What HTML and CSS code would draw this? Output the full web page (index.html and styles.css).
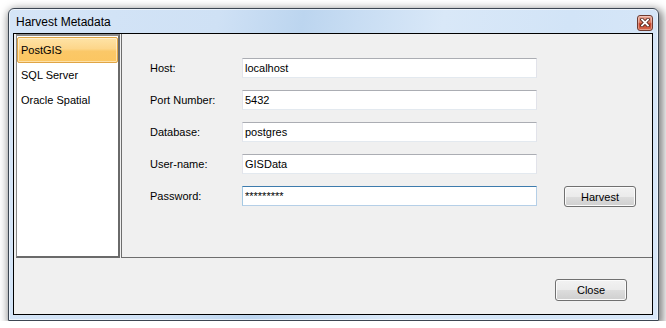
FILE: index.html
```html
<!DOCTYPE html>
<html lang="en">
<head>
    <meta charset="UTF-8">
    <title>Harvest Metadata</title>
    <link rel="stylesheet" href="styles.css">
</head>
<body>
    <div class="window">
        <div class="titlebar">
            <span class="title">Harvest Metadata</span>
            <button class="close-x" title="Close">
                <svg width="10" height="9" viewBox="0 0 10 9">
                    <path d="M2 1.5 L8 7.5 M8 1.5 L2 7.5" stroke="#4a1f18" stroke-width="3.4" stroke-linecap="square"/>
                    <path d="M2 1.5 L8 7.5 M8 1.5 L2 7.5" stroke="#ffffff" stroke-width="1.8" stroke-linecap="square"/>
                </svg>
            </button>
        </div>

        <div class="client">
            <div class="split">
                <ul class="sources">
                    <li class="selected">PostGIS</li>
                    <li>SQL Server</li>
                    <li>Oracle Spatial</li>
                </ul>

                <div class="settings">
                    <div class="form">
                        <label for="host">Host:</label>
                        <input type="text" id="host" value="localhost">
                        <span></span>

                        <label for="port">Port Number:</label>
                        <input type="text" id="port" value="5432">
                        <span></span>

                        <label for="database">Database:</label>
                        <input type="text" id="database" value="postgres">
                        <span></span>

                        <label for="user">User-name:</label>
                        <input type="text" id="user" value="GISData">
                        <span></span>

                        <label for="password">Password:</label>
                        <input type="text" id="password" class="focused" value="*********">
                        <button class="btn harvest">Harvest</button>
                    </div>
                </div>
            </div>

            <div class="footer">
                <button class="btn">Close</button>
            </div>
        </div>
    </div>
</body>
</html>
```

FILE: styles.css
```css
body {
    margin: 0;
    background-color: white;
    font-family: "Liberation Sans", Arial, sans-serif;
    font-size: 11px;
    color: #000;
}

.window {
    width: 640px;
    height: 306px;
    margin: 8px 0 0 8px;
    padding: 0 5px 5px 4px;
    border: 1px solid #3c4652;
    border-radius: 6px 6px 0 0;
    background: linear-gradient(100deg, #d5e5f7 0%, #cfe1f5 30%, #bcd5ef 42%, #c8ddf3 50%, #d9e8f8 62%, #d2e4f7 80%, #d8e7f8 100%);
    box-shadow: inset 0 0 0 1px rgba(255,255,255,0.55), 2px 3px 8px 2px rgba(0,0,0,0.5);
}

.titlebar {
    height: 24px;
    display: flex;
    align-items: center;
    justify-content: space-between;
    padding-left: 3px;
}

.title {
    font-size: 12px;
    padding-top: 1px;
}

.close-x {
    width: 16px;
    height: 16px;
    margin-top: 3px;
    padding: 0;
    border: 1px solid #6e3a30;
    border-radius: 3px;
    background: linear-gradient(#e9a897 0%, #dc7a62 45%, #c4422a 55%, #d76a4e 100%);
    box-shadow: inset 0 0 0 1px rgba(255,255,255,0.35);
    display: flex;
    align-items: center;
    justify-content: center;
}

.client {
    height: 280px;
    border: 1px solid #000;
    background-color: #f0f0f0;
}

.split {
    display: flex;
    height: 224px;
}

.sources {
    list-style: none;
    margin: 0 0 0 2px;
    padding: 1px 0 0 0;
    width: 101px;
    border-top: 2px solid #8a8a8a;
    border-left: 1px solid #8a8a8a;
    border-right: 2px solid #6a6a6a;
    border-bottom: 2px solid #6a6a6a;
    background-color: white;
}

.sources li {
    height: 25px;
    line-height: 25px;
    padding-left: 4px;
    box-sizing: border-box;
}

.sources li.selected {
    height: 26px;
    border: 1px solid #e0a544;
    border-radius: 2px;
    padding-left: 3px;
    line-height: 24px;
    background: linear-gradient(#fee3a6 0%, #fdd68a 45%, #fbc868 55%, #fcc661 100%);
    box-shadow: inset 0 0 0 1px rgba(255,255,255,0.45);
}

.settings {
    flex: 1;
    margin-left: 1px;
    border-left: 1px solid #6d6d6d;
    border-bottom: 1px solid #6d6d6d;
    padding: 24px 0 0 28px;
}

.form {
    display: grid;
    grid-template-columns: 92px 295px auto;
    grid-auto-rows: 20px;
    row-gap: 12px;
    align-items: center;
}

.form label {
    padding-bottom: 1px;
}

.form input {
    box-sizing: border-box;
    width: 295px;
    height: 20px;
    margin: 0;
    padding: 0 2px;
    font-family: "Liberation Sans", Arial, sans-serif;
    font-size: 11px;
    color: #000;
    background-color: white;
    border: 1px solid #e2e3ea;
    border-top-color: #abadb3;
    border-bottom-color: #e3e9ef;
    outline: none;
}

.form input.focused {
    border-color: #b5cfe7;
    border-top-color: #3d7bad;
    border-left-color: #a4c9e3;
}

.btn {
    box-sizing: border-box;
    width: 72px;
    height: 22px;
    padding: 0;
    font-family: "Liberation Sans", Arial, sans-serif;
    font-size: 11px;
    color: #000;
    border: 1px solid #707070;
    border-radius: 3px;
    background: linear-gradient(#f2f2f2 0%, #ebebeb 50%, #dddddd 51%, #cfcfcf 100%);
    box-shadow: inset 0 0 0 1px #fbfbfb;
}

.harvest {
    height: 21px;
    margin-left: 27px;
    align-self: start;
}

.footer {
    display: flex;
    justify-content: flex-end;
    padding: 21px 25px 0 0;
}
```
